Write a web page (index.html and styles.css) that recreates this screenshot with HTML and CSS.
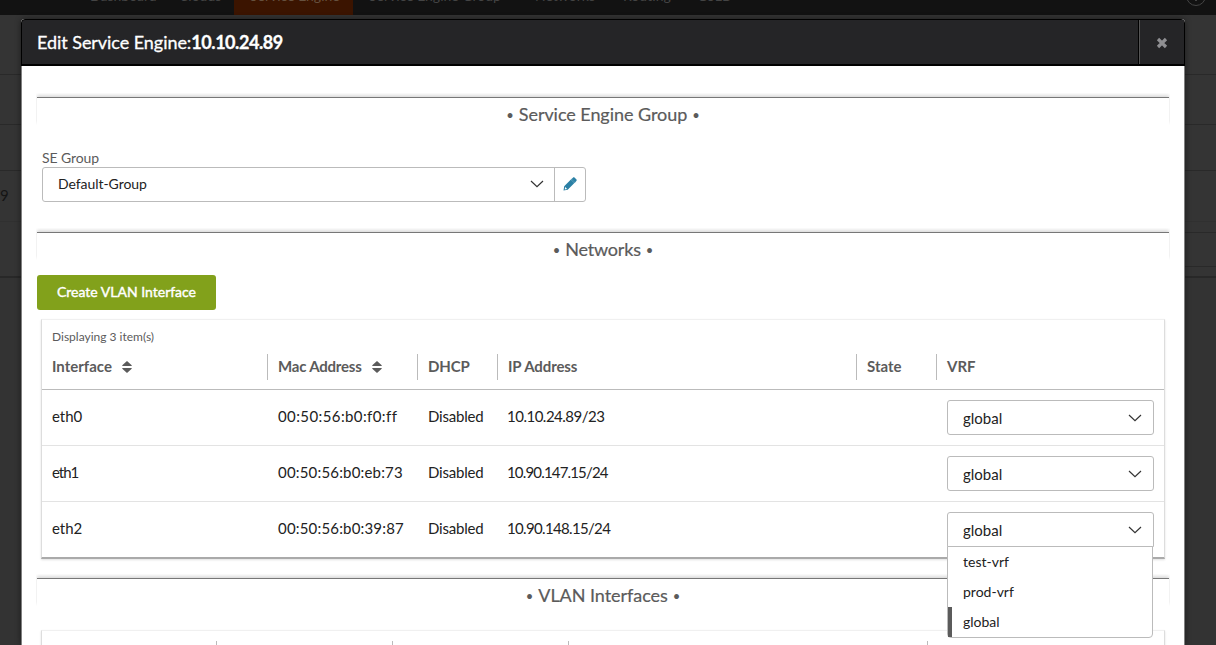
FILE: index.html
```html
<!DOCTYPE html>
<html lang="en">
<head>
<meta charset="utf-8">
<title>Edit Service Engine</title>
<link rel="stylesheet" href="styles.css">
</head>
<body>
<svg class="defs" width="0" height="0">
  <symbol id="chevron" viewBox="0 0 14 8"><path d="M1 1l6 5.700L13 1" fill="none" stroke="#333" stroke-width="1.200"/></symbol>
  <symbol id="sort" viewBox="0 0 10 12"><path d="M5 0L9.700 4.300V5H.3v-.7zM.3 7h9.400v.7L5 12 .3 7.700z" fill="#5b5b5b"/></symbol>
</svg>
<div class="backdrop">
  <nav class="tabs">
    <span class="tab t1">Dashboard</span><span class="tab t2">Clouds</span><span class="tab active">Service Engine</span><span class="tab t4">Service Engine Group</span><span class="tab t5">Networks</span><span class="tab t6">Routing</span><span class="tab t7">GSLB</span>
    <svg class="help" width="22" height="22" viewBox="0 0 22 22"><circle cx="11" cy="11" r="9.500" fill="none" stroke="#444"/><path d="M11 9v7" stroke="#444" stroke-width="2"/></svg>
  </nav>
  <div class="bg r1"></div><div class="bg r2"></div><div class="bg r3"></div>
  <div class="bg r4">9</div><div class="bg r5"><i class="pager"></i></div><div class="rest"></div>
</div>
<main class="modal">
  <header class="head">
    <h1>Edit Service Engine:<b>10.10.24.89</b></h1>
    <button class="close"><svg width="12" height="12" viewBox="0 0 12 12"><path d="M2 2l8 8M10 2L2 10" stroke="#8f8f92" stroke-width="3.200"/></svg></button>
  </header>
  <div class="content">
    <section class="group">
      <h2><i>•</i><span class="h-group">Service Engine Group</span><i>•</i></h2>
      <label>SE Group</label>
      <div class="picker">
        <div class="value"><span>Default-Group</span><svg width="14" height="8"><use href="#chevron"/></svg></div>
        <div class="edit"><svg width="14" height="14" viewBox="0 0 14 14"><path d="M.5 13.500L1.200 9.200 7.900 2.600l3.500 3.500-6.700 6.600zM8.600 1.900L9.900.7c.6-.6 1.200-.6 1.800 0l1.600 1.600c.6.600.6 1.200 0 1.800L12.100 5.400z" fill="#2b80a5"/><path d="M8 2.600l.8-.8 3.400 3.400-.8.9z" fill="#2b80a5"/><path d="M1.700 12.400l.5-2.400 1.900 1.900z" fill="#fff"/></svg></div>
      </div>
    </section>
    <section class="networks">
      <h2><i>•</i><span class="h-net">Networks</span><i>•</i></h2>
      <button class="create">Create VLAN Interface</button>
      <div class="table">
        <p class="count">Displaying 3 item(s)</p>
        <div class="row th">
          <div><span>Interface</span><svg width="10" height="12"><use href="#sort"/></svg></div>
          <div><span class="c-mac">Mac Address</span><svg width="10" height="12"><use href="#sort"/></svg></div>
          <div class="tight"><span>DHCP</span></div><div class="tight"><span>IP Address</span></div><div><span>State</span></div><div><span>VRF</span></div>
        </div>
        <div class="row td"><div>eth0</div><div class="mac wide">00:50:56:b0:f0:ff</div><div class="dhcp">Disabled</div><div class="ip">10.10.24.89/23</div><div></div>
          <div class="vrf"><div class="select">global<svg width="14" height="8"><use href="#chevron"/></svg></div></div></div>
        <div class="row td"><div class="eth1">eth1</div><div class="mac">00:50:56:b0:eb:73</div><div class="dhcp">Disabled</div><div class="ip ip-narrow">10.90.147.15/24</div><div></div>
          <div class="vrf"><div class="select">global<svg width="14" height="8"><use href="#chevron"/></svg></div></div></div>
        <div class="row td"><div>eth2</div><div class="mac">00:50:56:b0:39:87</div><div class="dhcp">Disabled</div><div class="ip ip-mid">10.90.148.15/24</div><div></div>
          <div class="vrf"><div class="select open">global<svg width="14" height="8"><use href="#chevron"/></svg>
            <ul class="menu"><li>test-vrf</li><li>prod-vrf</li><li class="current">global</li></ul></div></div></div>
      </div>
    </section>
    <section class="vlans">
      <h2><i>•</i><span class="h-vlan">VLAN Interfaces</span><i>•</i></h2>
      <div class="table vlan-table"><div class="vlan-head"><i></i><i></i><i></i><i></i><i></i></div></div>
    </section>
  </div>
</main>
</body>
</html>
```

FILE: styles.css
```css
* { box-sizing: border-box; margin: 0; padding: 0; }
html, body { height: 645px; overflow: hidden; }
body { font: 15px/20px Lato, "Open Sans", sans-serif; color: #222; background: #333; position: relative; }
.defs { position: absolute; }
button { font: inherit; border: 0; }

.backdrop { height: 645px; overflow: hidden; }
.tabs { display: flex; height: 15px; background: #121212; color: #444; overflow: hidden; padding-left: 74px; position: relative; }
.tab { display: block; height: 19px; margin-top: -4px; padding: 0 16px; font-size: 14px; line-height: 0; white-space: nowrap; }
.t1 { width: 89px; }
.t2 { width: 71px; }
.active { width: 119px; background: #3b1400; color: #66513f; }
.t4 { width: 166px; }
.t5 { width: 88px; }
.t6 { width: 74px; }
.help { position: absolute; right: 9px; top: -15px; }
.bg { background: #343434; border-bottom: 1px solid #292929; }
.r1 { height: 60px; }
.r2 { height: 50px; }
.r3 { height: 46px; }
.r4 { height: 51px; line-height: 49px; color: #151515; border-color: #303030; }
.r5 { height: 56px; border-bottom: 2px solid #282828; padding: 10px 0 0 1185px; }
.pager { display: block; height: 35px; border: 1px solid #292929; border-width: 1px 0; }
.rest { height: 367px; background: #333; }

.modal { position: absolute; left: 21px; top: 19px; width: 1164px; height: 626px; box-shadow: 0 0 6px rgba(0,0,0,.45); border-radius: 4px 4px 0 0; overflow: hidden; background: #fff; }
.head { display: flex; height: 47px; background: #252527; border: 1px solid #000; border-bottom-width: 2px; border-radius: 4px 4px 0 0; }
.head h1 { flex: 1; color: #fff; font-size: 18px; font-weight: 400; line-height: 45px; padding-left: 15px; letter-spacing: -.05px; -webkit-text-stroke: .3px #fff; }
.head b { font-weight: 700; letter-spacing: -.45px; }
.close { width: 46px; background: #252527; border-left: 1px solid #000; box-shadow: inset 1px 0 #555; display: grid; place-items: center; padding-top: 1px; }
.content { height: 579px; border: 1px solid #808080; border-width: 0 1px; padding: 31px 15px 0; }

h2 { display: flex; justify-content: center; gap: 5px; height: 28px; border-top: 1px solid #777; box-shadow: 0 -2px 3px rgba(0,0,0,.14); color: #5b5b5b; font-size: 18px; line-height: 33px; font-weight: 400; background: #fff; clip-path: inset(-4px -1px 0 -1px); }
h2 span { -webkit-text-stroke: .2px #5b5b5b; }
h2 i { font-style: normal; font-size: 13px; line-height: 35px; }
.h-group { letter-spacing: -.05px; }
.h-net { letter-spacing: -.2px; }
.h-vlan { letter-spacing: -.05px; }
.group { height: 135px; }
.group label { display: block; margin: 23px 0 0 5px; height: 19px; line-height: 20px; font-size: 14px; letter-spacing: -.1px; color: #5b5b5b; }
.picker { display: flex; width: 544px; height: 35px; margin-left: 5px; border: 1px solid #bbb; border-radius: 3px; }
.value { flex: 1; display: flex; align-items: center; justify-content: space-between; padding: 0 10px 0 15px; font-size: 14px; letter-spacing: -.05px; }
.value span { padding-bottom: 2px; }
.value svg { margin-bottom: 1px; }
.edit { width: 31px; border-left: 1px solid #bbb; display: grid; place-items: center; padding-bottom: 1px; }

.networks { height: 346px; }
.create { display: block; margin-top: 15px; width: 179px; height: 35px; padding-bottom: 2px; background: #82a11b; color: #fff; border-radius: 3px; font-size: 14px; -webkit-text-stroke: .4px #fff; }
.table { margin: 9px 4px 0 4px; height: 240px; border: 1px solid #ddd; border-top-color: #f0f0f0; border-bottom: 2px solid #aaa; box-shadow: 0 1px 2px rgba(0,0,0,.12); }
.count { height: 34px; padding-left: 10px; line-height: 33px; font-size: 12px; color: #5b5b5b; }
.row { display: grid; grid-template-columns: 225px 150px 80px 359px 80px 1fr; }
.row > div { padding-left: 10px; }
.th { height: 36px; border-bottom: 1px solid #bbb; color: #5b5b5b; font-weight: 700; line-height: 24px; }
.th > div { height: 26px; border-left: 1px solid #bbb; display: flex; align-items: center; gap: 10px; padding-bottom: 1px; }
.th > div:first-child { border-left: 0; }
.th span { padding-bottom: 2px; }
.th .c-mac { letter-spacing: -.2px; }
.th .tight { letter-spacing: -.1px; }
.td { height: 56px; border-bottom: 1px solid #e3e3e3; line-height: 53px; }
.td:last-child { border: 0; }
.td > div { padding-left: 11px; }
.td > div:first-child { padding-left: 10px; }
.td > .eth1 { letter-spacing: -1px; }
.td .mac { letter-spacing: .18px; }
.td .wide { letter-spacing: .4px; }
.td .dhcp { letter-spacing: -.2px; }
.td .ip { padding-left: 10px; letter-spacing: -.5px; }
.td .ip-narrow { letter-spacing: -.83px; }
.td .ip-mid { letter-spacing: -.66px; }
.td > .vrf { padding-top: 10px; }
.select { position: relative; width: 207px; height: 35px; border: 1px solid #bbb; border-radius: 3px; background: #fff; padding: 0 11px 0 15px; display: flex; align-items: center; justify-content: space-between; line-height: 32px; }
.open { border-radius: 3px 3px 0 0; }
.menu { position: absolute; z-index: 2; left: -1px; top: 33px; width: 206px; height: 92px; list-style: none; background: #fff; border: 1px solid #bbb; border-radius: 0 0 4px 4px; font-size: 14px; }
.menu li { height: 30px; line-height: 30px; padding-left: 15px; }
.menu .current { border-left: 4px solid #5b5b5b; padding-left: 11px; }
.vlan-table { margin-top: 24px; }
.vlan-head { display: grid; grid-template-columns: 175px 176px 176px 359px 1fr; padding-top: 10px; height: 36px; }
.vlan-head i { border-right: 1px solid #bbb; }
.vlan-head i:last-child { border: 0; }
```
